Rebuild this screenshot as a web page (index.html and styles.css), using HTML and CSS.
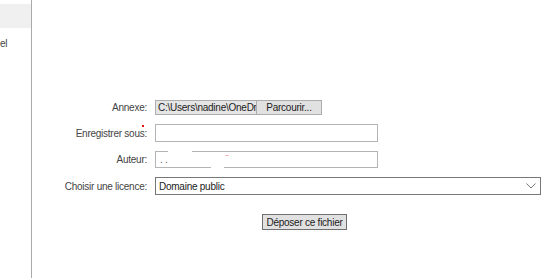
FILE: index.html
```html
<!DOCTYPE html>
<html lang="fr">
<head>
  <meta charset="UTF-8" />
  <title>Déposer un fichier</title>
  <link rel="stylesheet" href="styles.css">
</head>
<body>
  <div class="sidebar">
    <div class="side-band"></div>
    <div class="side-link">el</div>
  </div>

  <div class="main">
    <form class="upload-form">
      <label class="lbl">Annexe:</label>
      <div class="file-field">
        <span class="file-path">C:\Users\nadine\OneDri</span>
        <span class="file-btn">Parcourir...</span>
      </div>

      <label class="lbl">Enregistrer sous:<span class="req"></span></label>
      <input class="txt" type="text">

      <label class="lbl">Auteur:</label>
      <div class="author">
        <input class="txt" type="text" value=". .">
        <span class="mask mask-top"></span>
        <span class="mask mask-bottom"></span>
        <span class="mask-red"></span>
      </div>

      <label class="lbl">Choisir une licence:</label>
      <div class="select">
        <span>Domaine public</span>
        <svg width="10" height="6" viewBox="0 0 10 6"><path d="M0.5 0.5 L5 5 L9.5 0.5" fill="none" stroke="#777" stroke-width="1"/></svg>
      </div>
    </form>

    <div class="actions">
      <button class="submit" type="button">Déposer ce fichier</button>
    </div>
  </div>
</body>
</html>
```

FILE: styles.css
```css
body {
  margin: 0;
  font-family: "Liberation Sans", Arial, sans-serif;
  font-size: 10px;
  letter-spacing: -0.25px;
  color: #333;
  background: #fff;
  display: flex;
  height: 278px;
  overflow: hidden;
}

.sidebar {
  width: 31px;
  border-right: 1px solid #aaa;
  padding-top: 4px;
  flex-shrink: 0;
}

.side-band {
  height: 24px;
  background: #f0f0f0;
}

.side-link {
  margin-top: 10px;
  color: #444;
}

.main {
  flex: 1;
  padding-top: 100px;
}

.upload-form {
  display: grid;
  grid-template-columns: 115px auto;
  column-gap: 8px;
  row-gap: 9px;
  align-items: center;
  justify-items: start;
}

.lbl {
  justify-self: end;
  color: #444;
  position: relative;
}

.req {
  position: absolute;
  right: 3px;
  top: -3px;
  width: 2px;
  height: 2px;
  background: #e81010;
}

.file-field {
  display: flex;
  height: 15px;
}

.file-path {
  width: 101px;
  box-sizing: border-box;
  border: 1px solid #adadad;
  border-right: none;
  background: #e5e5e5;
  padding: 1px 0 0 2px;
  overflow: hidden;
  white-space: nowrap;
  color: #222;
}

.file-btn {
  width: 66px;
  box-sizing: border-box;
  border: 1px solid #adadad;
  background: #e1e1e1;
  text-align: center;
  padding-top: 1px;
  color: #222;
}

.txt {
  width: 223px;
  height: 18px;
  box-sizing: border-box;
  border: 1px solid #b4b4b4;
  margin: 0;
  padding: 0 4px;
  font: inherit;
  letter-spacing: inherit;
  color: #666;
  outline: none;
}

.author {
  position: relative;
}

.author .txt {
  height: 17px;
  display: block;
}

.mask {
  position: absolute;
  background: #fff;
  height: 3px;
}

.mask-top {
  left: 13px;
  width: 24px;
  top: -1px;
}

.mask-bottom {
  left: 56px;
  width: 13px;
  bottom: -1px;
}

.mask-red {
  position: absolute;
  left: 70px;
  top: 4px;
  width: 4px;
  height: 1px;
  background: #f4b8b8;
}

.select {
  width: 386px;
  height: 18px;
  box-sizing: border-box;
  border: 1px solid #777;
  display: flex;
  align-items: center;
  justify-content: space-between;
  padding: 0 4px 0 3px;
  color: #222;
}

.actions {
  margin-top: 19px;
  padding-left: 230px;
}

.submit {
  height: 16px;
  width: 85px;
  padding: 0;
  border: 1px solid #707070;
  background: #e1e1e1;
  font: inherit;
  letter-spacing: inherit;
  color: #222;
  border-radius: 0;
}
```
